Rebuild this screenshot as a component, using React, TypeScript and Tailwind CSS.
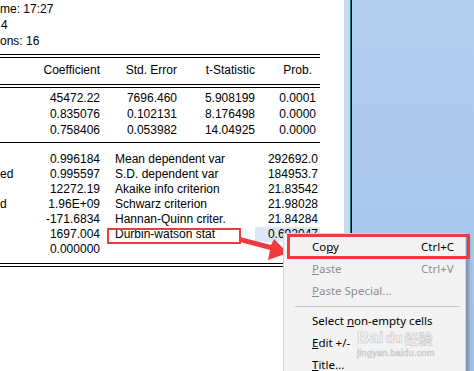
import React from 'react';

const topRows = [
  ['45472.22', '7696.460', '5.908199', '0.0001'],
  ['0.835076', '0.102131', '8.176498', '0.0000'],
  ['0.758406', '0.053982', '14.04925', '0.0000'],
];

const statRows = [
  { side: '', left: '0.996184', label: 'Mean dependent var', right: '292692.0' },
  { side: 'ed', left: '0.995597', label: 'S.D. dependent var', right: '184953.7' },
  { side: '', left: '12272.19', label: 'Akaike info criterion', right: '21.83542' },
  { side: 'd', left: '1.96E+09', label: 'Schwarz criterion', right: '21.98028' },
  { side: '', left: '-171.6834', label: 'Hannan-Quinn criter.', right: '21.84284' },
  { side: '', left: '1697.004', label: 'Durbin-watson stat', right: '0.692047' },
  { side: '', left: '0.000000', label: '', right: '' },
];

const DoubleRule = () => (
  <div>
    <div className="border-t border-black" />
    <div className="h-[2px]" />
    <div className="border-t border-black" />
  </div>
);

const MenuItem = ({ children, shortcut, disabled }: { children: React.ReactNode; shortcut?: string; disabled?: boolean }) => (
  <div className={`flex items-center h-[22px] pl-[28px] ${disabled ? 'text-[#8d8d8d]' : 'text-black'}`}>
    <span className="w-[109px] whitespace-nowrap">{children}</span>
    {shortcut && <span className="whitespace-nowrap">{shortcut}</span>}
  </div>
);

export default function App() {
  return (
    <div className="relative w-[474px] h-[371px] overflow-hidden flex bg-white font-['Liberation_Sans',Arial,sans-serif] text-[12px] text-black">
      {/* output view */}
      <div className="w-[344px] shrink-0 bg-white">
        <div className="pt-[1px] leading-4">
          <div>me: 17:27</div>
          <div className="pl-[1px]">4</div>
          <div>ons: 16</div>
        </div>

        <div className="w-[320px] mt-[5px]">
          <DoubleRule />
          <div className="grid grid-cols-[100px_77px_78px_57px] h-[26px] pt-[4px] leading-4 text-right">
            <span>Coefficient</span>
            <span>Std. Error</span>
            <span>t-Statistic</span>
            <span>Prob.</span>
          </div>
          <DoubleRule />
          <div className="pt-[2px] pb-[4px] leading-4">
            {topRows.map((r, i) => (
              <div key={i} className="grid grid-cols-[100px_77px_78px_61px] text-right">
                {r.map((c, j) => (
                  <span key={j}>{c}</span>
                ))}
              </div>
            ))}
          </div>
          <div className="border-t border-black" />

          <div className="pt-[9px] pb-[6px] leading-[15px]">
            {statRows.map((r, i) => (
              <div key={i} className="grid grid-cols-[100px_155px_65px] h-[15px]">
                <div className="flex justify-between">
                  <span>{r.side}</span>
                  <span>{r.left}</span>
                </div>
                <span className="pl-[15px] whitespace-nowrap">{r.label}</span>
                <span className={`text-right pr-[2px] ${i === 5 ? 'bg-[#dce8f7]' : ''}`}>{r.right}</span>
              </div>
            ))}
          </div>
          <DoubleRule />
        </div>
      </div>

      {/* window frame on the right */}
      <div className="w-[6px] shrink-0 bg-[#c8d9f1]" />
      <div className="w-[1px] shrink-0 bg-[#0d6f6f]" />
      <div className="w-[1px] shrink-0 bg-black" />
      <div className="flex-1 bg-gradient-to-b from-[#b5ceee] to-[#a2c1ea]" />

      {/* annotation box around Durbin-watson */}
      <div className="absolute left-[107px] top-[228px] w-[134px] h-[16px] border-2 border-[#ef3b3f]" />

      {/* annotation arrow */}
      <svg className="absolute left-[236px] top-[232px]" width="56" height="32" viewBox="236 232 56 32">
        <polygon points="240,237 271,245 274,239 288,253 268,260 270,250 240,242" fill="#ef3b3f" />
      </svg>

      {/* context menu */}
      <div className="absolute left-[283px] top-[233px] w-[183px] h-[150px] bg-[#f3f3f3] border border-[#d4d4d4] shadow-[3px_3px_3px_rgba(0,0,0,0.25)] pt-[2px] font-['Noto_Sans',sans-serif] text-[11.5px]">
        <MenuItem shortcut="Ctrl+C">Co<u>p</u>y</MenuItem>
        <MenuItem shortcut="Ctrl+V" disabled><u>P</u>aste</MenuItem>
        <MenuItem disabled><u>P</u>aste Special...</MenuItem>
        <div className="h-[8px] flex items-center pl-[11px] pr-[5px]">
          <div className="w-full border-t border-[#c8c8c8]" />
        </div>
        <MenuItem>Select <u>n</u>on-empty cells</MenuItem>
        <MenuItem><u>E</u>dit +/-</MenuItem>
        <MenuItem><u>T</u>itle...</MenuItem>
      </div>

      {/* highlight box around Copy */}
      <div className="absolute left-[287px] top-[234px] w-[183px] h-[25px] border-[3px] border-[#ef3b3f]" />

      {/* faint watermark */}
      <div className="absolute left-[357px] top-[329px] text-[#f8f8f8] [-webkit-text-stroke:0.7px_#cdcdcd] font-['Liberation_Sans',sans-serif] pointer-events-none">
        <div className="flex items-end gap-[2px] text-[17px] font-bold leading-[18px]">
          <span>Bai</span>
          <span className="text-[14px]">du</span>
          <span className="font-['Noto_Sans_CJK_SC',sans-serif] text-[14px]">经验</span>
        </div>
        <div className="text-[9px] leading-[12px] tracking-[0.3px]">jingyan.baidu.com</div>
      </div>
    </div>
  );
}
